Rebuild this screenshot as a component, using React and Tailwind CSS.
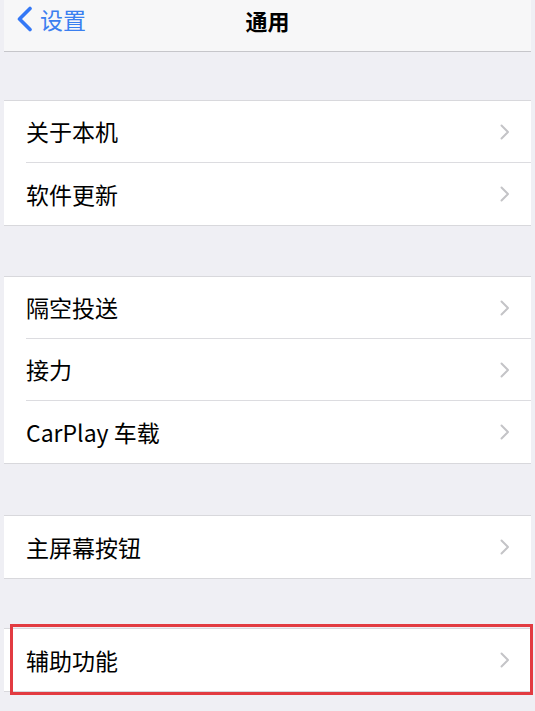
import React from 'react';

const font = { fontFamily: '"Noto Sans CJK SC", "Noto Sans", sans-serif' };

const Chevron = () => (
  <svg width="10" height="16" viewBox="0 0 10 16" className="shrink-0">
    <path d="M1.5 1.5 L8 8 L1.5 14.5" fill="none" stroke="#c4c4c7" strokeWidth="2" strokeLinecap="round" strokeLinejoin="round" />
  </svg>
);

const Row = ({ label, last }) => (
  <div className="flex h-[62px] items-stretch bg-white pl-[22px]">
    <div className={`flex flex-1 items-center justify-between pr-[21px] ${last ? '' : 'border-b border-[#dcdce0]'}`}>
      <span className="text-[23px] leading-none text-black">{label}</span>
      <Chevron />
    </div>
  </div>
);

const Group = ({ items }) => (
  <div className="border-y border-[#d8d8dc] bg-white">
    {items.map((label, i) => (
      <Row key={label} label={label} last={i === items.length - 1} />
    ))}
  </div>
);

export default function App() {
  return (
    <div className="min-h-[711px] w-[535px] overflow-hidden bg-[#efeff4] px-[4px]" style={font}>
      <div className="relative flex h-[52px] items-center border-b border-[#c6c6ca] bg-[#f7f7f8] pb-[13px]">
        <div className="flex items-center gap-[5px] pl-[11px] text-[#3b7ff0]">
          <svg width="20" height="26" viewBox="0 0 20 26">
            <path d="M15 2.5 L4.5 13 L15 23.5" fill="none" stroke="#3478f6" strokeWidth="3.6" strokeLinecap="round" strokeLinejoin="round" />
          </svg>
          <span className="text-[23px] leading-none">设置</span>
        </div>
        <span className="absolute left-1/2 top-[9px] -translate-x-1/2 text-[22px] font-bold leading-none text-black">通用</span>
      </div>

      <div className="h-[48px]" />
      <Group items={['关于本机', '软件更新']} />
      <div className="h-[50px]" />
      <Group items={['隔空投送', '接力', 'CarPlay 车载']} />
      <div className="h-[51px]" />
      <Group items={['主屏幕按钮']} />
      <div className="h-[49px]" />
      <div className="relative">
        <Group items={['辅助功能']} />
        <div className="pointer-events-none absolute -bottom-[3px] -right-[2px] -top-[4px] left-[6px] border-[3px] border-[#e23b41]" />
      </div>
    </div>
  );
}
